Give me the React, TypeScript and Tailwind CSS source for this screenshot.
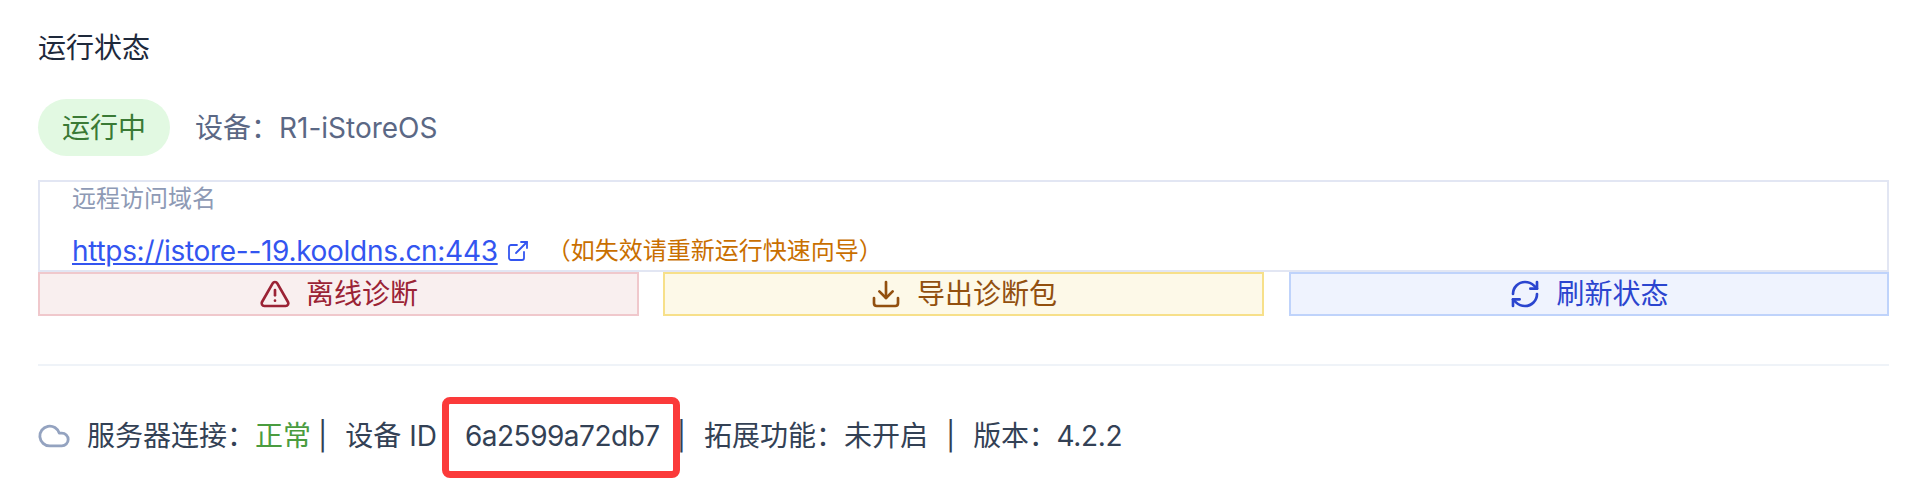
import { TriangleAlert, Download, RefreshCw, Cloud, ExternalLink } from 'lucide-react';

const fontStack = "font-['Inter','Noto_Sans_CJK_SC',sans-serif]";

export default function App() {
    return (
        <div className={`${fontStack} w-[1916px] h-[502px] overflow-hidden bg-white pl-[38px] pr-[27px] pt-[31px]`}>
            <h2 className="h-[34px] text-[28px] leading-[34px] font-normal text-[#1e293b]">运行状态</h2>

            <div className="mt-[34px] flex items-center h-[57px]">
                <span className="flex items-center justify-center w-[132px] h-[57px] rounded-full bg-[#e2f9e2] text-[28px] text-[#3a7a35]">运行中</span>
                <span className="ml-[25px] text-[28px] text-[#5b6885]">设备：R1-iStoreOS</span>
            </div>

            <div className="mt-[24px] h-[92px] border-2 border-[#e2e6f3] pl-[32px]">
                <div className="text-[24px] leading-[34px] h-[34px] text-[#8e9ab5]">远程访问域名</div>
                <div className="mt-[18px] flex items-center h-[34px]">
                    <a className="text-[28px] tracking-[-0.3px] text-[#3355f0] underline">https://istore--19.kooldns.cn:443</a>
                    <ExternalLink className="ml-[8px] w-[24px] h-[24px] text-[#3355f0]" strokeWidth={1.8} />
                    <span className="ml-[17px] text-[24px] text-[#c96f00]">（如失效请重新运行快速向导）</span>
                </div>
            </div>

            <div className="grid grid-cols-3 gap-[24px]">
                <button className="flex items-center justify-center gap-[15px] h-[44px] border-2 border-[#f0c8cc] bg-[#f9efef] text-[28px] text-[#9b2335]">
                    <TriangleAlert className="w-[32px] h-[32px]" strokeWidth={2} />
                    离线诊断
                </button>
                <button className="flex items-center justify-center gap-[15px] h-[44px] border-2 border-[#f7e08a] bg-[#fdf9e8] text-[28px] text-[#92500f]">
                    <Download className="w-[32px] h-[32px]" strokeWidth={2} />
                    导出诊断包
                </button>
                <button className="ml-[1px] flex items-center justify-center gap-[15px] h-[44px] border-2 border-[#bfd3fb] bg-[#eff3fe] text-[28px] text-[#2b45cf]">
                    <RefreshCw className="w-[32px] h-[32px]" strokeWidth={2} />
                    刷新状态
                </button>
            </div>

            <div className="mt-[48px] border-t-2 border-[#eff3f8]" />

            <div className="mt-[52px] flex items-center h-[36px] text-[28px] text-[#334155]">
                <Cloud className="-ml-[1px] w-[34px] h-[34px] text-[#94a3c0]" strokeWidth={2} />
                <span className="ml-[16px]">服务器连接：</span>
                <span className="text-[#4a9c3f]">正常</span>
                <span className="ml-[7px]">|</span>
                <span className="ml-[18px]">设备 ID</span>
                <span className="relative ml-[28px] tracking-[-0.5px]">
                    6a2599a72db7
                    <span className="absolute left-[-23px] right-[-20px] top-[-18px] bottom-[-21px] border-[7px] border-[#fb3a3a] rounded-[8px]" />
                </span>
                <span className="ml-[17px]">|</span>
                <span className="ml-[18px]">拓展功能：未开启</span>
                <span className="ml-[18px]">|</span>
                <span className="ml-[18px] tracking-[-0.3px]">版本：4.2.2</span>
            </div>
        </div>
    );
}
